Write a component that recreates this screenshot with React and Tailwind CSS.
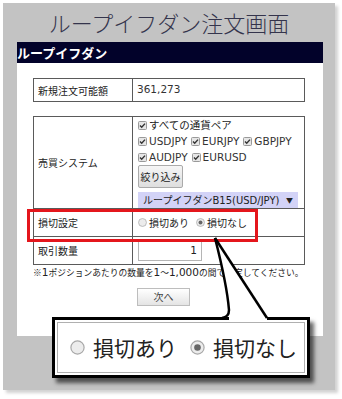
import React from "react";

const L = ({ children, className = "" }) => (
  <span className={`font-['DejaVu_Sans',sans-serif] text-[10.5px] ${className}`}>{children}</span>
);

const Check = () => (
  <svg width="9" height="9" viewBox="0 0 9 9" className="shrink-0">
    <rect x="0.5" y="0.5" width="8" height="8" rx="1" fill="#e6e6e6" stroke="#9a9a9a" />
    <path d="M2 4.6 L3.7 6.3 L7 2.6" fill="none" stroke="#333" strokeWidth="1.4" />
  </svg>
);

const Radio = ({ on, size = 9 }) => (
  <svg width={size} height={size} viewBox="0 0 10 10" className="shrink-0">
    <circle cx="5" cy="5" r="4.4" fill="#ececec" stroke="#a8a8a8" strokeWidth="0.8" />
    {on && <circle cx="5" cy="5" r="2.2" fill="#666" />}
  </svg>
);

const Pair = ({ name }) => (
  <span className="flex items-center gap-[2px] mr-[4px]">
    <Check />
    <L className="text-[10.5px] text-[#333]">{name}</L>
  </span>
);

export default function App() {
  return (
    <div className="relative w-[342px] h-[399px] overflow-hidden bg-white pt-[3px] pl-[3px] font-['Noto_Sans_CJK_JP',sans-serif] text-[#222]">
      <div className="w-[332px] h-[387px] bg-[#c3c3c3] shadow-[3px_3px_3px_rgba(0,0,0,0.18)]">
        <div className="h-[39px] flex items-center justify-center text-[22px] font-light text-[#34344c]">
          ループイフダン注文画面
        </div>
        <div className="ml-[14px] w-[306px] h-[21px] bg-[#02022a] text-white text-[13px] font-bold leading-[21px]">
          ループイフダン
        </div>
        <div className="ml-[14px] w-[306px] h-[273px] bg-white px-[16px] pt-[15px] text-[10px]">
          <div className="w-[272px] h-[24px] border border-[#5a5a5a] flex">
            <div className="w-[99px] border-r border-[#5a5a5a] pl-[4px] flex items-center">新規注文可能額</div>
            <div className="pl-[4px] flex items-center"><L className="text-[#333]">361,273</L></div>
          </div>

          <div className="mt-[14px] w-[272px] border border-[#5a5a5a]">
            <div className="h-[91px] flex">
              <div className="w-[99px] border-r border-[#5a5a5a] pl-[4px] flex items-center">売買システム</div>
              <div className="pl-[5px] flex flex-col leading-[16px]">
                <span className="flex items-center gap-[2px] h-[16px]"><Check /><span className="text-[10.5px]">すべての通貨ペア</span></span>
                <div className="flex items-center h-[16px]">
                  <Pair name="USDJPY" />
                  <Pair name="EURJPY" />
                  <Pair name="GBPJPY" />
                </div>
                <div className="flex items-center h-[16px]">
                  <Pair name="AUDJPY" />
                  <Pair name="EURUSD" />
                </div>
                <button className="w-[45px] h-[23px] border border-[#aaa] rounded-[2px] bg-gradient-to-b from-[#f6f6f6] to-[#dedede] text-[10px] text-[#222] leading-none">
                  絞り込み
                </button>
                <div className="mt-[4px] w-[160px] h-[16px] bg-[#d3d3f7] flex items-center justify-between pl-[5px] pr-[5px]">
                  <span className="text-[10px] leading-none">ループイフダン<L className="text-[10px]">B15(USD/JPY)</L></span>
                  <span className="text-[7px] text-[#222]">▼</span>
                </div>
              </div>
            </div>
            <div className="h-[28px] flex border-t border-[#5a5a5a]">
              <div className="w-[99px] border-r border-[#5a5a5a] pl-[4px] flex items-center">損切設定</div>
              <div className="pl-[5px] flex items-center gap-[2px] text-[10px]">
                <Radio />
                <span className="mr-[5px]">損切あり</span>
                <Radio on />
                <span>損切なし</span>
              </div>
            </div>
            <div className="h-[28px] flex border-t border-[#5a5a5a]">
              <div className="w-[99px] border-r border-[#5a5a5a] pl-[4px] flex items-center">取引数量</div>
              <div className="pl-[5px] flex items-center">
                <div className="w-[64px] h-[20px] border border-[#b5b5b5] flex items-center justify-end pr-[4px]">
                  <L>1</L>
                </div>
              </div>
            </div>
          </div>

          <div className="text-[8.75px] leading-[14px] whitespace-nowrap">
            ※<L className="text-[8.5px]">1</L>ポジションあたりの数量を<L className="text-[8.5px]">1</L>～<L className="text-[8.5px]">1,000</L>の間で指定してください。
          </div>

          <button className="mt-[8px] ml-[104px] w-[53px] h-[18px] border border-[#bdbdbd] bg-gradient-to-b from-white to-[#e4e4e4] text-[10px] text-[#444] leading-none">
            次へ
          </button>
        </div>
      </div>

      {/* red highlight */}
      <div className="absolute left-[27px] top-[209px] w-[231px] h-[33px] border-[3px] border-[#e4161c]" />

      {/* callout box */}
      <div className="absolute left-[52px] top-[317px] w-[258px] h-[61px] bg-white border-[3px] border-black shadow-[4px_5px_4px_rgba(0,0,0,0.6)]">
        <div className="m-[2px] h-[calc(100%-4px)] border border-[#b0b0b0] flex items-center pl-[12px] text-[21px] text-[#222]">
          <Radio size={15} />
          <span className="ml-[8px] mr-[13px]">損切あり</span>
          <Radio on size={15} />
          <span className="ml-[8px]">損切なし</span>
        </div>
      </div>

      {/* callout tail */}
      <svg className="absolute left-0 top-0" width="342" height="399" viewBox="0 0 342 399">
        <path d="M215 238 Q227 285 229 312 L229 321 L267 321 L267 317 Z" fill="white" />
        <path d="M215 238 Q227 285 229 310 Q229 317 222 318" fill="none" stroke="black" strokeWidth="2.5" />
        <path d="M215 238 L267 318" fill="none" stroke="black" strokeWidth="2.5" />
      </svg>
    </div>
  );
}
